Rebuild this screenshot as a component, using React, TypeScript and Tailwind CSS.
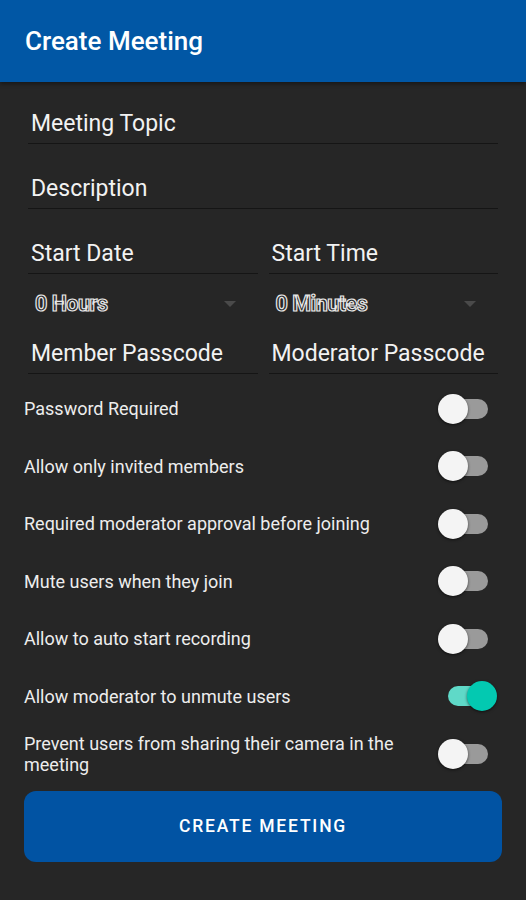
import * as React from "react";

const TOGGLES: { label: string; on: boolean }[] = [
  { label: "Password Required", on: false },
  { label: "Allow only invited members", on: false },
  { label: "Required moderator approval before joining", on: false },
  { label: "Mute users when they join", on: false },
  { label: "Allow to auto start recording", on: false },
  { label: "Allow moderator to unmute users", on: true },
  { label: "Prevent users from sharing their camera in the meeting", on: false },
];

function Field({ label, className = "" }: { label: string; className?: string }) {
  return (
    <div className={`flex h-[65px] items-end border-b border-[#151515] pb-[4px] ${className}`}>
      <span className="pl-[3px] text-[23px] leading-[30px] text-[#f2f2f2]">{label}</span>
    </div>
  );
}

function Spinner({ label }: { label: string }) {
  return (
    <div className="flex h-[50px] flex-1 items-center justify-between pl-[7px] pr-[22px] pt-[10px]">
      <span className="text-[21.5px] font-bold tracking-[-0.5px] text-[#2a2a2a] [-webkit-text-stroke:1.2px_#e8e8e8]">
        {label}
      </span>
      <span className="h-0 w-0 border-x-[6px] border-t-[6px] border-x-transparent border-t-[#4a4a4a]" />
    </div>
  );
}

function Switch({ on }: { on: boolean }) {
  return (
    <div className="relative h-[30px] w-[60px] shrink-0">
      <div
        className={`absolute top-[5px] h-[20px] w-[46px] rounded-full ${
          on ? "left-[10px] bg-[#5fd9c8]" : "left-[4px] bg-[#9a9a9a]"
        }`}
      />
      <div
        className={`absolute top-0 h-[30px] w-[30px] rounded-full shadow-[0_1px_3px_rgba(0,0,0,0.6)] ${
          on ? "left-[29px] bg-[#03c9b1]" : "left-0 bg-[#f4f4f4]"
        }`}
      />
    </div>
  );
}

export default function App() {
  return (
    <div className="flex h-[900px] w-[526px] flex-col bg-[#262626] font-['Roboto',sans-serif]">
      {/* App bar */}
      <div className="flex h-[82px] items-center bg-[#0157a5] pl-[25px] shadow-[0_2px_4px_rgba(0,0,0,0.4)]">
        <h1 className="text-[26px] font-medium text-white">Create Meeting</h1>
      </div>

      {/* Form */}
      <div className="flex flex-col px-[28px] pt-[2px]">
        <Field label="Meeting Topic" className="!h-[60px]" />
        <Field label="Description" />
        <div className="flex gap-[11px]">
          <Field label="Start Date" className="flex-1" />
          <Field label="Start Time" className="flex-1" />
        </div>
        <div className="flex gap-[11px]">
          <Spinner label="0 Hours" />
          <Spinner label="0 Minutes" />
        </div>
        <div className="flex gap-[11px]">
          <Field label="Member Passcode" className="!h-[50px] flex-1" />
          <Field label="Moderator Passcode" className="!h-[50px] flex-1" />
        </div>
      </div>

      {/* Toggles */}
      <div className="mt-[6px] flex flex-col pl-[24px] pr-[28px]">
        {TOGGLES.map((t) => (
          <div key={t.label} className="flex h-[57.5px] items-center justify-between">
            <span className="max-w-[390px] text-[18px] leading-[21px] text-[#ededed]">{t.label}</span>
            <Switch on={t.on} />
          </div>
        ))}
      </div>

      <div className="px-[24px] pt-[8px]">
        <button className="flex h-[71px] w-full items-center justify-center rounded-[12px] bg-[#0153a3] text-[17.5px] font-medium tracking-[1.8px] text-white">
          CREATE MEETING
        </button>
      </div>
    </div>
  );
}
